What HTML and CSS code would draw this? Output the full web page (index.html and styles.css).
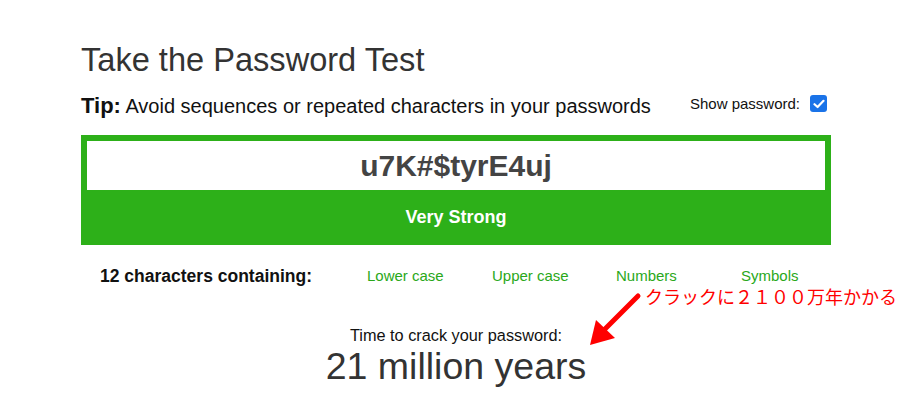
FILE: index.html
```html
<!DOCTYPE html>
<html lang="en">
<head>
    <meta charset="UTF-8">
    <title>Password Test</title>
    <link rel="stylesheet" href="styles.css">
</head>
<body>
    <div class="container">
        <h1>Take the Password Test</h1>
        <div class="tip-row">
            <p class="tip"><b>Tip:</b> Avoid sequences or repeated characters in your passwords</p>
            <label class="show">Show password: <span class="check"><svg width="12" height="10" viewBox="0 0 12 10"><path d="M1.5 5.2 L4.6 8 L10.5 1.8" fill="none" stroke="#fff" stroke-width="2.2" stroke-linecap="round" stroke-linejoin="round"/></svg></span></label>
        </div>
        <div class="meter">
            <div class="pw">u7K#$tyrE4uj</div>
            <div class="strength">Very Strong</div>
        </div>
        <div class="chars">
            <div class="count">12 characters containing:</div>
            <div class="kind">Lower case</div>
            <div class="kind">Upper case</div>
            <div class="kind">Numbers</div>
            <div class="kind">Symbols</div>
        </div>
        <div class="crack">
            <svg class="arrow" width="56" height="56" viewBox="0 0 56 56"><line x1="52" y1="4" x2="18" y2="38" stroke="#f00" stroke-width="5" stroke-linecap="round"/><polygon points="4,53 10,28 29,46" fill="#f00"/></svg>
            <span class="note">クラックに２１００万年かかる</span>
            <div class="label">Time to crack your password:</div>
            <div class="time">21 million years</div>
        </div>
    </div>
</body>
</html>
```

FILE: styles.css
```css
body {
    margin: 0;
    font-family: "Liberation Sans", Arial, sans-serif;
    color: #222;
    background: #fff;
}
.container {
    width: 750px;
    margin-left: 81px;
    padding-top: 40px;
}
h1 {
    margin: 0;
    font-size: 32.6px;
    font-weight: normal;
    color: #333;
    line-height: 40px;
}
.tip-row {
    display: flex;
    align-items: center;
    justify-content: space-between;
    margin-top: 10px;
    height: 32px;
}
.tip {
    margin: 0;
    font-size: 20px;
    color: #111;
}
.tip b {
    font-size: 22px;
}
.show {
    display: flex;
    align-items: center;
    gap: 10px;
    font-size: 15px;
    color: #111;
    margin-right: 4px;
    margin-top: -5px;
}
.check {
    width: 17px;
    height: 17px;
    border-radius: 3px;
    background: #1a73e8;
    display: flex;
    align-items: center;
    justify-content: center;
}
.meter {
    margin-top: 13px;
    border: 6px solid #2db019;
    border-bottom: 0;
    background: #2db019;
}
.pw {
    background: #fff;
    height: 49px;
    line-height: 49px;
    text-align: center;
    font-size: 30px;
    font-weight: bold;
    color: #444;
}
.strength {
    height: 55px;
    line-height: 55px;
    text-align: center;
    color: #fff;
    font-weight: bold;
    font-size: 18px;
}
.chars {
    display: grid;
    grid-template-columns: 267px 125px 124px 125px 90px;
    padding-left: 19px;
    margin-top: 21px;
    align-items: start;
}
.count {
    font-weight: bold;
    font-size: 17.5px;
    color: #111;
}
.kind {
    font-size: 15px;
    color: #2aa81a;
    padding-top: 2px;
    line-height: 16px;
}
.crack {
    position: relative;
    text-align: center;
    margin-top: 39px;
}
.label {
    font-size: 16.3px;
    color: #111;
}
.time {
    font-size: 37.5px;
    color: #333;
}
.note {
    position: absolute;
    left: 564px;
    top: -39px;
    font-family: "Noto Sans CJK JP", sans-serif;
    font-size: 18px;
    color: #f00;
    white-space: nowrap;
    line-height: 19px;
}
.arrow {
    position: absolute;
    left: 505px;
    top: -34px;
}
```
